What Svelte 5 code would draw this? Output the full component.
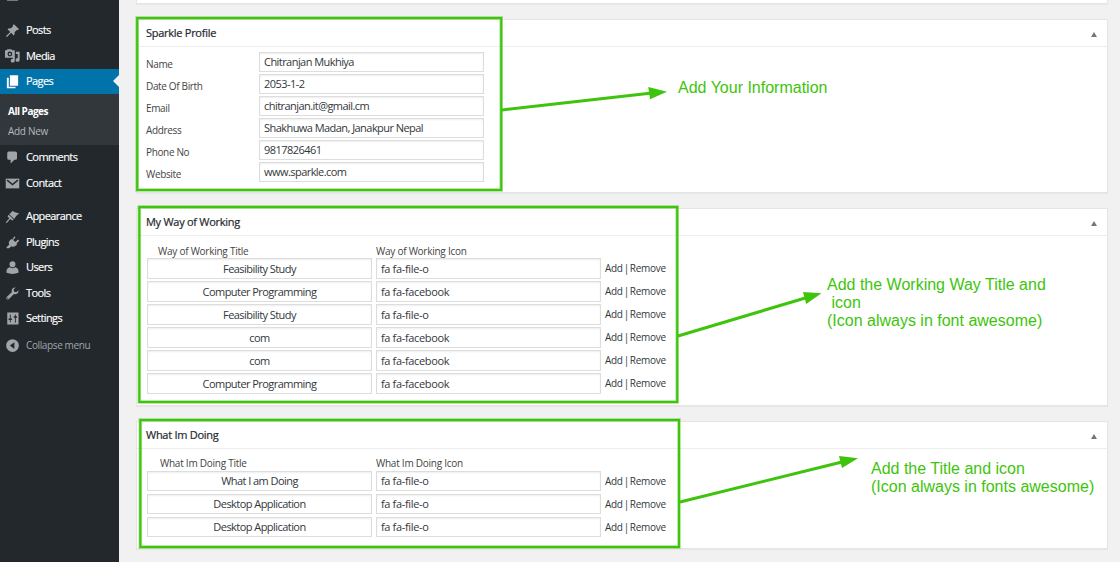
<script>
  const mainMenu = [
    { label: 'Posts', icon: 'pin', h: 26 },
    { label: 'Media', icon: 'media', h: 26, raise: true },
    { label: 'Pages', icon: 'pages', h: 25, active: true, raise: true },
    { label: 'Comments', icon: 'comment', h: 25, raise: true },
    { label: 'Contact', icon: 'mail', h: 26 },
    { label: 'Appearance', icon: 'brush', h: 26, gap: true },
    { label: 'Plugins', icon: 'plug', h: 26 },
    { label: 'Users', icon: 'user', h: 25, raise: true },
    { label: 'Tools', icon: 'wrench', h: 26 },
    { label: 'Settings', icon: 'sliders', h: 25, raise: true },
    { label: 'Collapse menu', icon: 'collapse', h: 28, muted: true }
  ];
  const profile = [
    ['Name', 'Chitranjan Mukhiya'],
    ['Date Of Birth', '2053-1-2'],
    ['Email', 'chitranjan.it@gmail.cm'],
    ['Address', 'Shakhuwa Madan, Janakpur Nepal'],
    ['Phone No', '9817826461'],
    ['Website', 'www.sparkle.com']
  ];
  const tables = [
    {
      title: 'My Way of Working', kind: 'working',
      heads: ['Way of Working Title', 'Way of Working Icon'],
      rows: [
        ['Feasibility Study', 'fa fa-file-o'],
        ['Computer Programming', 'fa fa-facebook'],
        ['Feasibility Study', 'fa fa-file-o'],
        ['com', 'fa fa-facebook'],
        ['com', 'fa fa-facebook'],
        ['Computer Programming', 'fa fa-facebook']
      ]
    },
    {
      title: 'What Im Doing', kind: 'doing',
      heads: ['What Im Doing Title', 'What Im Doing Icon'],
      rows: [
        ['What I am Doing', 'fa fa-file-o'],
        ['Desktop Application', 'fa fa-file-o'],
        ['Desktop Application', 'fa fa-file-o']
      ]
    }
  ];
  const boxes = [
    [137.2, 18, 364, 172],
    [139.3, 207, 537.9, 195],
    [140.3, 420, 538.7, 127]
  ];
  const arrows = [
    { line: 'M502 110 652 93', head: '648.3,87 667,91.7 650,99.3' },
    { line: 'M678 336 807 297.5', head: '803,292 821.5,293.3 806.2,304' },
    { line: 'M680 502 843 461.8', head: '839,456 858,458.3 842,468' }
  ];
  const notes = [
    [678, 93, 'Add Your Information'],
    [827, 290, 'Add the Working Way Title and'],
    [831.5, 308, 'icon'],
    [827, 326, '(Icon always in font awesome)'],
    [871, 474, 'Add the Title and icon'],
    [871, 492, '(Icon always in fonts awesome)']
  ];
</script>

{#snippet glyph(name)}
  <svg class="icon" viewBox="0 0 20 20" width="16" height="16" aria-hidden="true">
    {#if name === 'pin'}
      <path d="M10.4 3l1.5-1.5 6.6 6.6-1.5 1.5-1.3-.3-3 3c.4 1.6.1 3.2-1 4.4l-3.6-3.6L3 18.3 1.5 18.6l.3-1.5L7 11.9 3.3 8.3c1.2-1.1 2.8-1.4 4.4-1l3-3z" />
    {:else if name === 'media'}
      <path fill-rule="evenodd" d="M0 3h2L3.300 1.500h5L9.600 3H13V13H0zM6.500 4.800a3.200 3.200 0 100 6.400 3.200 3.200 0 000-6.400zm0 1.700a1.500 1.500 0 110 3 1.500 1.500 0 010-3z" />
      <path d="M14.500 5H19.500v11a2.700 2.500 0 11-2.500-2.500V8h-2.500zM10.500 12h2.500v5a2.700 2.500 0 11-2.500-2.500z" />
    {:else if name === 'pages'}
      <path d="M6.500 1.500H17.500v14H6.500zM2.500 5H5V17H14V19H2.500z" />
    {:else if name === 'comment'}
      <path d="M5 2h9q2 0 2 2v7q0 2-2 2h-1.500L7.500 18v-5H5q-2 0-2-2V4q0-2 2-2z" />
    {:else if name === 'mail'}
      <path d="M1 3.500h18v13H1z" />
      <path class="cut" d="M2.800 5.500l7.200 6 7.200-6" />
    {:else if name === 'brush'}
      <path d="M10 2.500l3.500 1.800L19 6l-3.500 2.500-3.300 4.800L5.700 7zM5 7.800l6.400 6.100-1.700 1.500-2.800-2L2.500 18.500 1 17.500l4.700-5-2.300-3z" />
    {:else if name === 'plug'}
      <path d="M12.500 1.500l1.500 1.500-3.100 3.500 2.800 2.700 3.800-3.100L19 7.600l-3.700 3.700 1 1-1.800 1.800c-1.900 1.900-4.200 2.100-6 .8L5.500 17.700H2.600L1.700 16.700l4-3.900c-1.100-1.900-.7-4 1-5.700L8.500 5.300l1 1z" />
    {:else if name === 'user'}
      <path d="M10 1.500c2.500 0 4 1.700 4 4s-1.500 4.300-4 4.300-4-2-4-4.300 1.500-4 4-4zM6.500 9.700Q10 12.500 13.500 9.700q4.500 1.300 4.500 5.300v2q-8 3-16 0v-2q0-4 4.500-5.300z" />
    {:else if name === 'wrench'}
      <path d="M16.700 9.700c-1.300 1.300-3.200 1.500-4.800.9L5 17.500c-.8.8-2 .8-2.700 0s-.8-2 0-2.700L9.200 8c-.6-1.600-.4-3.400.9-4.700C11.200 2.200 12.700 1.800 14.200 2l-2.700 2.700.6 3 3 .6 2.800-2.700c.2 1.500-.1 3-1.200 4.100zM3.700 17a.8.8 0 100-1.600.8.8 0 000 1.600z" />
    {:else if name === 'sliders'}
      <path fill-rule="evenodd" d="M3 2h15v16H3zM6.400 4.500v5.500H4.800v2H6.400V15h1.200v-3h1.600v-2H7.600v-5.500zM13.200 4.500v2.500h-1.600v2H13.200v6.500h1.200V9H16V7h-1.600V4.500z" />
    {:else}
      <path fill-rule="evenodd" d="M10 1.500a8.500 8.500 0 100 17 8.500 8.500 0 000-17zM12.500 5.500v9L6.500 10z" />
    {/if}
  </svg>
{/snippet}

{#snippet heading(title)}
  <header><h2>{title}</h2><span class="toggle"></span></header>
{/snippet}

<div class="page">
  <nav>
    <div class="above"><i></i></div>
    {#each mainMenu as item}
      <div class="item" class:active={item.active} class:gap={item.gap} class:muted={item.muted} class:raise={item.raise} style:height="{item.h}px">
        {@render glyph(item.icon)}<span>{item.label}</span>
      </div>
      {#if item.active}
        <div class="submenu"><b>All Pages</b><span>Add New</span></div>
      {/if}
    {/each}
  </nav>

  <main>
    <section class="previous"></section>
    <section class="profile">
      {@render heading('Sparkle Profile')}
      <div class="fields">
        {#each profile as [label, value]}
          <div class="field"><span class="label">{label}</span><div class="input">{value}</div></div>
        {/each}
      </div>
    </section>
    {#each tables as t}
      <section class={t.kind}>
        {@render heading(t.title)}
        <div class="heads"><span>{t.heads[0]}</span><span>{t.heads[1]}</span></div>
        <div class="rows">
          {#each t.rows as [name, icon]}
            <div class="row">
              <div class="input center">{name}</div>
              <div class="input code">{icon}</div>
              <span class="actions">Add | Remove</span>
            </div>
          {/each}
        </div>
      </section>
    {/each}
  </main>

  <svg class="annotations" width="1120" height="562" viewBox="0 0 1120 562">
    {#each boxes as [x, y, width, height]}
      <rect class="halo" {x} {y} {width} {height} />
      <rect class="frame" {x} {y} {width} {height} />
    {/each}
    {#each arrows as a}
      <path class="shaft" d={a.line} />
      <polygon points={a.head} />
    {/each}
    {#each notes as [x, y, text]}
      <text {x} {y}>{text}</text>
    {/each}
  </svg>
</div>

<style>
  :global(body) { background: #f1f1f1; overflow: hidden; }
  .page {
    position: relative; display: flex; width: 1120px; height: 562px; overflow: hidden;
    box-sizing: border-box; font-family: "Open Sans", "Noto Sans", sans-serif; font-size: 11px; color: #32373c;
  }
  nav { width: 119px; flex: none; background: #23282d; color: #fff; }
  .above { height: 17px; }
  .above i { display: block; width: 11px; height: 1px; margin-left: 7px; background: #777b7e; }
  .item { display: flex; align-items: center; gap: 6px; padding-left: 5px; position: relative; box-sizing: border-box; letter-spacing: -0.58px; }
  .item > span { line-height: 16px; -webkit-text-stroke: 0.15px; }
  .raise { padding-bottom: 1px; }
  .icon { width: 15px; height: 15px; fill: #a0a5aa; flex: none; }
  .cut { fill: none; stroke: #23282d; stroke-width: 1.8; }
  .active { background: #0073aa; }
  .active .icon { fill: #fff; }
  .active::after {
    content: ''; position: absolute; right: 0; top: 6px;
    border: 6px solid transparent; border-left: 0; border-right-color: #f1f1f1;
  }
  .gap { margin-top: 7px; }
  .muted { color: #a0a5aa; font-size: 10px; letter-spacing: -0.38px; }
  .muted > span { -webkit-text-stroke: 0; }
  .submenu { height: 51px; box-sizing: border-box; padding: 7px 0 0 8px; background: #32373c; display: flex; flex-direction: column; font-size: 10px; line-height: 20px; }
  .submenu b { font-weight: 700; letter-spacing: -0.5px; }
  .submenu span { color: #b4b9be; letter-spacing: -0.3px; }

  main { flex: 1; padding: 0 12px 0 17px; display: flex; flex-direction: column; }
  section { background: #fff; border: 1px solid #e5e5e5; box-shadow: 0 1px 1px rgba(0,0,0,.04); box-sizing: border-box; flex: none; }
  .previous { height: 4px; border-top: 0; margin-bottom: 15px; }
  .profile { height: 174px; margin-bottom: 15px; }
  .working { height: 198px; margin-bottom: 15px; }
  .doing { height: 128px; }
  header { height: 26px; display: flex; align-items: center; justify-content: space-between; padding: 0 10px 0 9px; border-bottom: 1px solid #eee; }
  h2 { margin: 0; padding-bottom: 2px; font-size: 11px; font-weight: 400; color: #23282d; letter-spacing: -0.27px; -webkit-text-stroke: 0.2px; }
  .toggle { border: 3px solid transparent; border-top: 0; border-bottom: 5px solid #72777c; margin-top: 2px; }
  .fields { padding: 5px 0 0 9px; display: grid; gap: 2px; }
  .field { display: flex; }
  .label { width: 113px; font-size: 10px; line-height: 24px; height: 20px; color: #444; letter-spacing: -0.35px; }
  .input {
    width: 225px; height: 20px; box-sizing: border-box; border: 1px solid #ddd; padding: 0 4px;
    line-height: 18px; box-shadow: inset 0 1px 2px rgba(0,0,0,.07); letter-spacing: -0.55px; white-space: pre;
  }
  .code { letter-spacing: -0.35px; }
  .center { text-align: center; }
  .heads { display: flex; height: 22px; box-sizing: border-box; font-size: 10px; line-height: 14px; color: #444; padding: 8px 0 0 21px; letter-spacing: -0.25px; }
  .heads span:first-child { width: 218px; }
  .doing .heads { padding-left: 23px; padding-top: 7px; }
  .doing .heads span:first-child { width: 216px; }
  .rows { padding-left: 10px; display: grid; gap: 2px; }
  .row { display: flex; gap: 4px; }
  .working .input { height: 21px; line-height: 20px; }
  .doing .rows { gap: 3px; }
  .actions { font-size: 10px; line-height: 20px; height: 20px; letter-spacing: -0.3px; word-spacing: -1.3px; }

  .annotations { position: absolute; inset: 0; }
  .halo { fill: none; stroke: #3ec40c; stroke-opacity: .45; stroke-width: 3.600; }
  .frame { fill: none; stroke: #3ec40c; stroke-width: 2; }
  .shaft { stroke: #3ec40c; stroke-width: 3; }
  polygon, text { fill: #3ec40c; }
  text { font: 16px "Liberation Sans", Arial, sans-serif; }
</style>
